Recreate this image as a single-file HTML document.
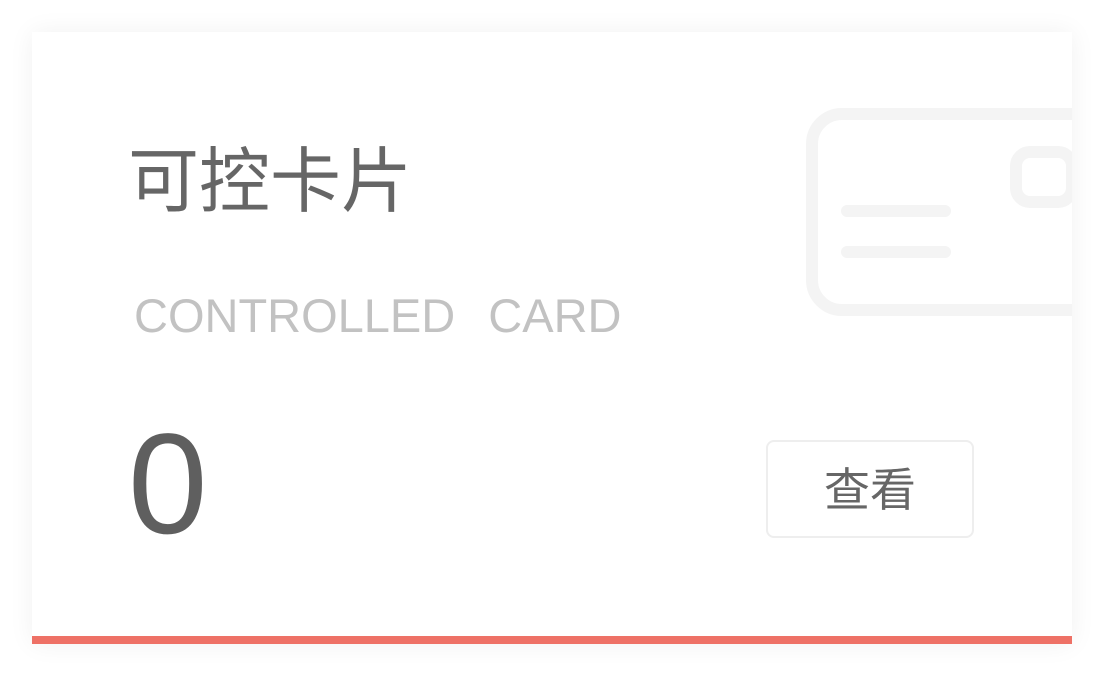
<!DOCTYPE html>
<html><head><meta charset="utf-8"><style>
html,body{margin:0;padding:0;background:#fff;width:1104px;height:676px;overflow:hidden;}
.card{position:absolute;left:32px;top:32px;width:1040px;height:612px;background:#fff;box-shadow:0 0 24px rgba(0,0,0,0.06);overflow:hidden;}
.bar{position:absolute;left:0;bottom:0;width:1040px;height:8px;background:#ee7166;}
.t{position:absolute;left:96px;top:106px;font-family:"Liberation Sans","Noto Sans CJK SC",sans-serif;font-size:71px;color:#666;line-height:90px;letter-spacing:0px;}
.s{position:absolute;left:102px;top:254px;font-family:"Liberation Sans",sans-serif;font-size:47px;color:#c2c2c2;line-height:60px;word-spacing:20px;}
.n{position:absolute;left:96px;top:368px;font-family:"Liberation Sans",sans-serif;font-size:143px;color:#5f5f5f;line-height:170px;}
.b{position:absolute;left:734px;top:408px;width:204px;height:94px;border:2px solid #eee;border-radius:8px;font-family:"Liberation Sans","Noto Sans CJK SC",sans-serif;font-size:46px;color:#666;text-align:center;line-height:96px;}
svg{position:absolute;left:0;top:0;}
</style></head><body>
<div class="card">
<svg width="1040" height="612">
<rect x="780" y="82" width="320" height="196" rx="30" fill="none" stroke="#f4f4f4" stroke-width="12"/>
<rect x="984" y="120" width="56" height="50" rx="14" fill="none" stroke="#f4f4f4" stroke-width="12"/>
<line x1="815" y1="179" x2="913" y2="179" stroke="#f4f4f4" stroke-width="12" stroke-linecap="round"/>
<line x1="815" y1="220" x2="913" y2="220" stroke="#f4f4f4" stroke-width="12" stroke-linecap="round"/>
</svg>
<div class="t">可控卡片</div>
<div class="s">CONTROLLED CARD</div>
<div class="n">0</div>
<div class="b">查看</div>
<div class="bar"></div>
</div>
</body></html>
